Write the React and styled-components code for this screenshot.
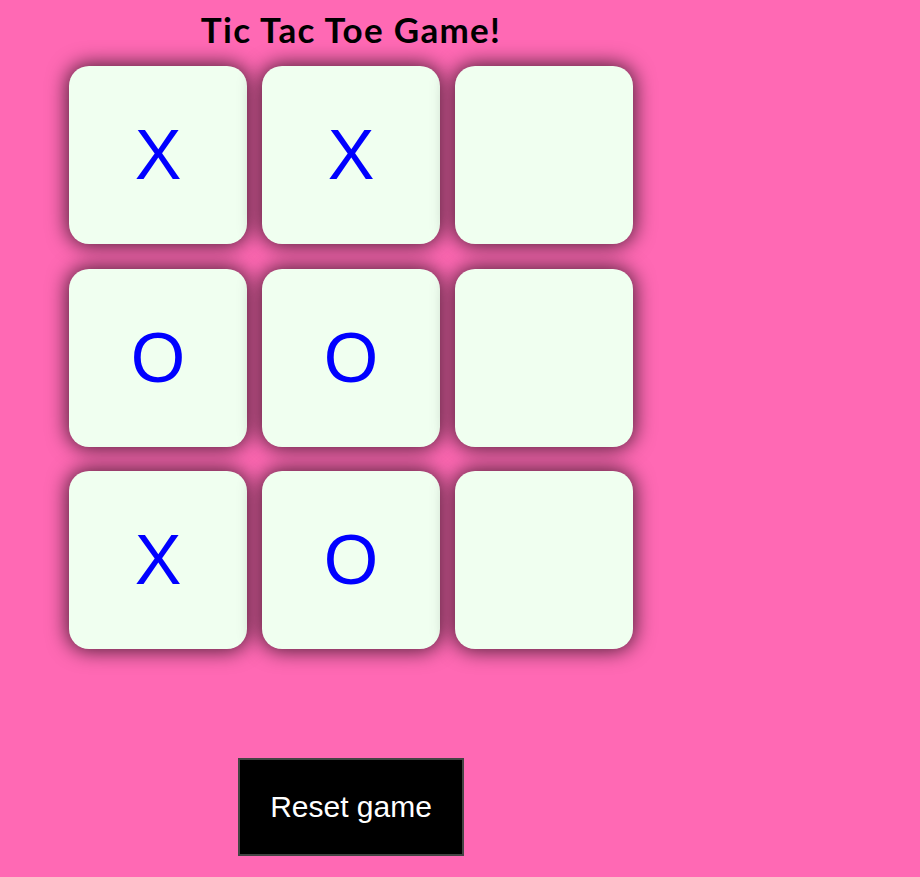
import React from "react";
import styled, { createGlobalStyle } from "styled-components";

const GlobalStyle = createGlobalStyle`
  body {
    margin: 0;
    background-color: #ff69b4;
    font-family: "Liberation Sans", Arial, sans-serif;
  }
`;

const Page = styled.div`
  width: 564px;
  padding: 10px 0 0 69px;
  display: flex;
  flex-direction: column;
  align-items: center;
`;

const Title = styled.h1`
  margin: 0 0 17px;
  font-family: Lato, "Liberation Sans", sans-serif;
  font-size: 35px;
  font-weight: 700;
  letter-spacing: 1.3px;
  line-height: 39px;
  color: #000;
`;

const Board = styled.div`
  display: grid;
  grid-template-columns: repeat(3, 178px);
  grid-auto-rows: 178px;
  column-gap: 15px;
  row-gap: 24.5px;
`;

const Cell = styled.div`
  display: flex;
  align-items: center;
  justify-content: center;
  background-color: #f0fff0;
  border-radius: 20px;
  box-shadow: 0 0 20px 2px rgba(0, 0, 0, 0.7);
  color: #0000ff;
  font-family: "Liberation Sans", Arial, sans-serif;
  font-size: 70px;
  cursor: pointer;
`;

const ResetButton = styled.button`
  margin-top: 109px;
  padding: 30px;
  background-color: #000;
  border: 2px solid #444;
  color: #fff;
  font-family: "Liberation Sans", Arial, sans-serif;
  font-size: 30px;
  line-height: 34px;
  cursor: pointer;
`;

const board = ["X", "X", "", "O", "O", "", "X", "O", ""];

const App = () => {
  return (
    <>
      <GlobalStyle />
      <Page>
        <Title>Tic Tac Toe Game!</Title>
        <Board>
          {board.map((val, i) => (
            <Cell key={i}>{val}</Cell>
          ))}
        </Board>
        <ResetButton>Reset game</ResetButton>
      </Page>
    </>
  );
};

export default App;
